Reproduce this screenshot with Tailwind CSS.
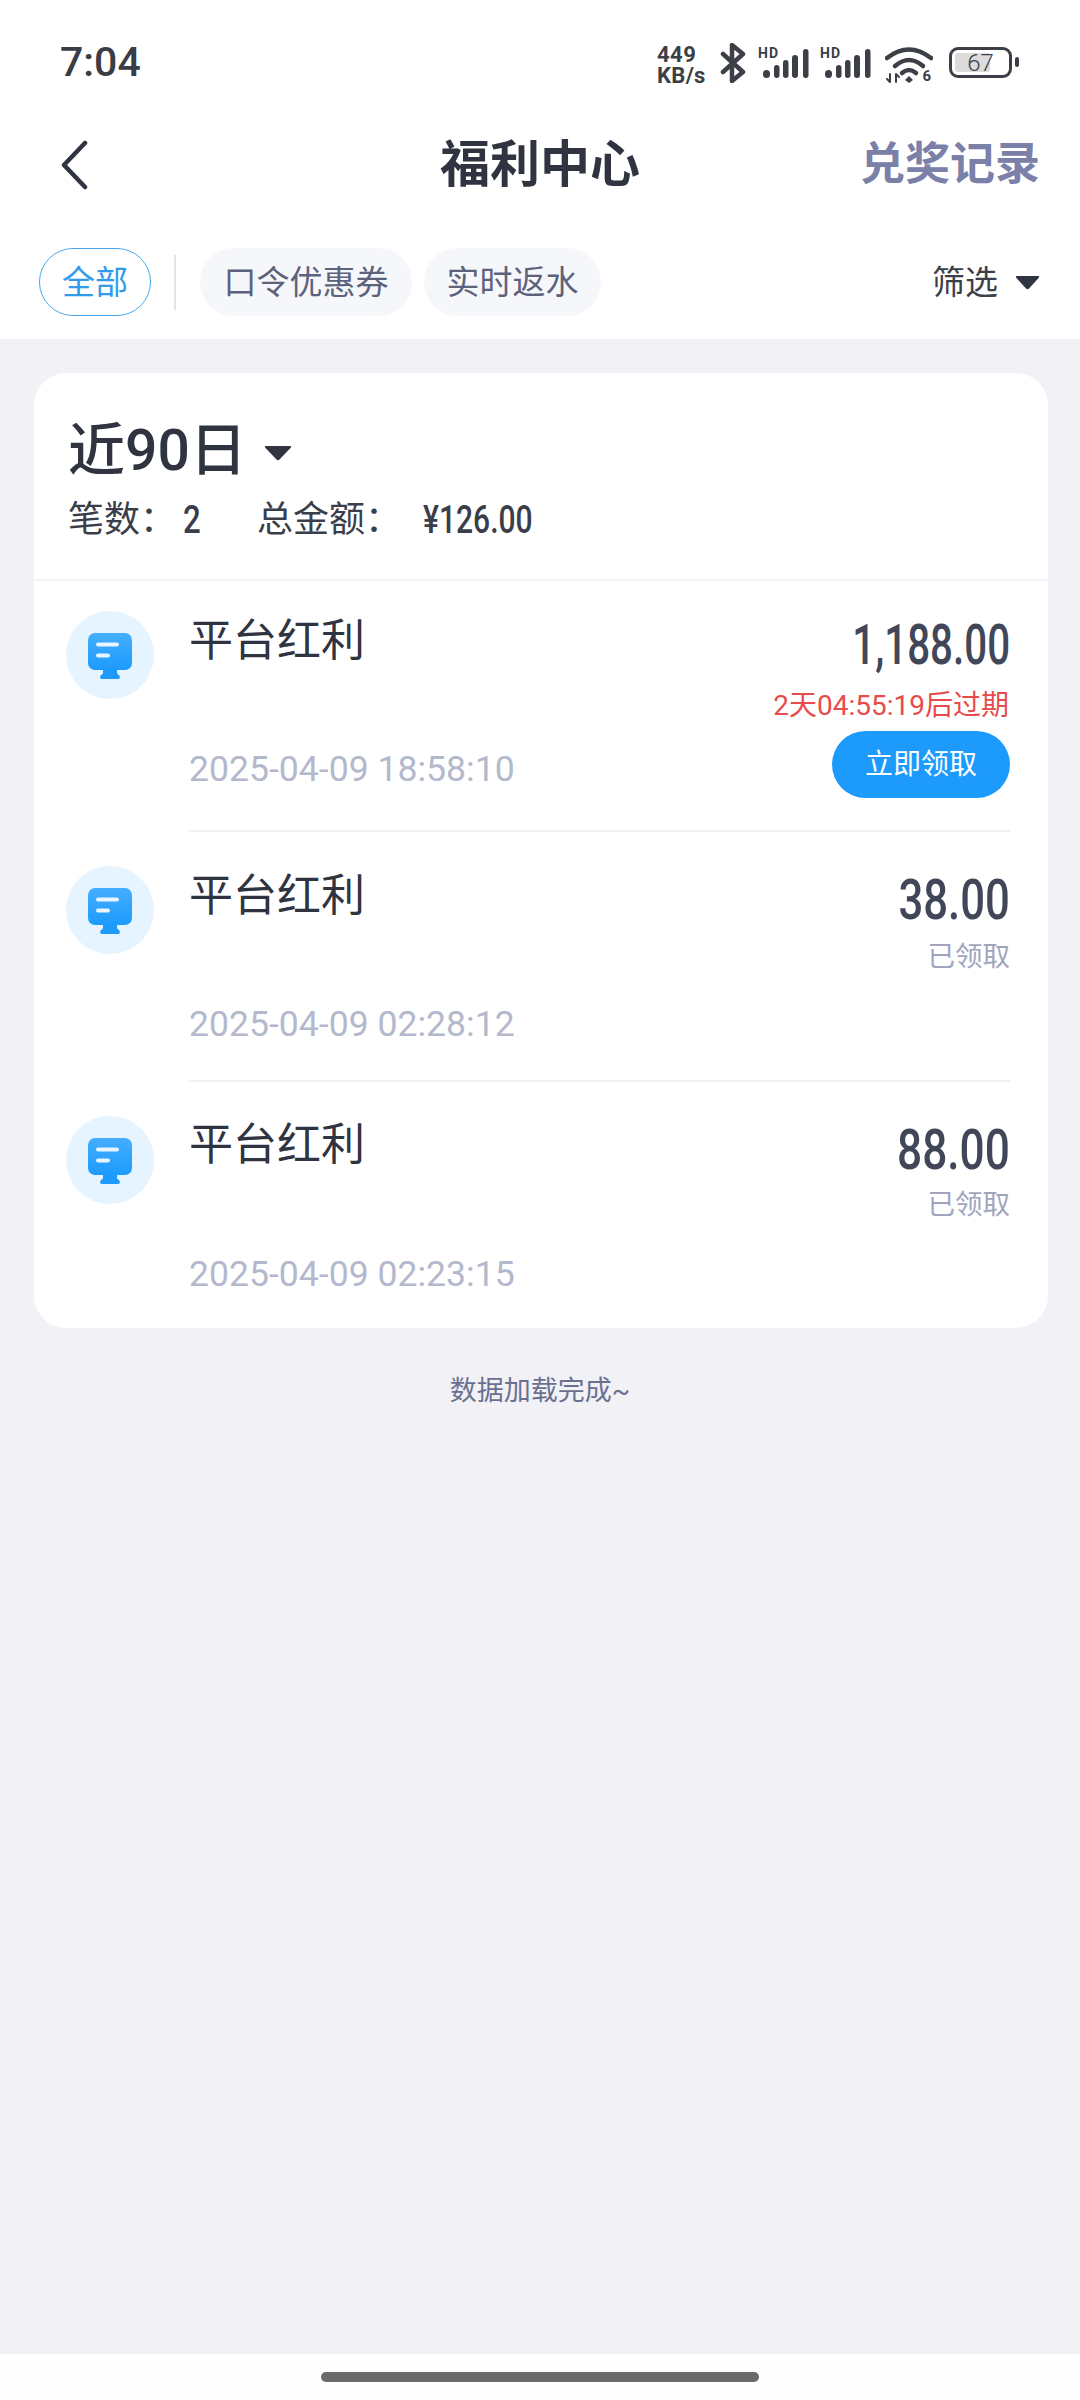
<!DOCTYPE html>
<html lang="zh">
<head>
  <meta charset="UTF-8" />
  <meta name="viewport" content="width=device-width, initial-scale=1.0"/>
  <title>福利中心</title>
  <script src="https://cdn.jsdelivr.net/npm/@tailwindcss/browser@4"></script>
</head>
<body class="bg-[#f1f1f6] font-['Roboto','Noto_Sans_CJK_SC',sans-serif] text-[#2f3440]">
<div class="w-[1080px] h-[2400px] flex flex-col overflow-hidden">

  <!-- status bar + nav + tabs -->
  <header class="bg-white h-[339px] shrink-0">
    <div class="h-[115px] pl-[60px] pr-[68px] pt-[40px] flex justify-between items-start">
      <span class="text-[41px] leading-[44px] font-medium text-[#3a3d45]">7:04</span>
      <div class="flex items-start text-[#3c3f46]">
        <div class="w-[63px] font-bold text-[22px] leading-[21px] mt-[4px]"><div class="tracking-[0.5px]">449</div><div class="tracking-[0.3px]">KB/s</div></div>
        <svg class="mt-[3px]" width="26" height="40" viewBox="0 0 26 40" fill="none" stroke="#3c3f46" stroke-width="4.500" stroke-linejoin="round" stroke-linecap="round"><path d="M3 11 L23 29 L12 38 V2 L23 11 L3 29"/></svg>
        <div class="relative w-[52px] h-[32px] ml-[12px] mt-[8px]">
          <span class="absolute left-0 -top-[2px] font-bold text-[14px] leading-[14px] tracking-[1px]">HD</span>
          <svg class="absolute left-0 top-0" width="52" height="32" viewBox="0 0 52 32" fill="#3c3f46"><rect x="5" y="22" width="7" height="8" rx="3.500"/><rect x="16" y="17" width="5.500" height="13" rx="2.700"/><rect x="25" y="12" width="5.500" height="18" rx="2.700"/><rect x="34" y="7" width="6" height="23" rx="3"/><rect x="45" y="1" width="5.500" height="29" rx="2.700"/></svg>
        </div>
        <div class="relative w-[52px] h-[32px] ml-[10px] mt-[8px]">
          <span class="absolute left-0 -top-[2px] font-bold text-[14px] leading-[14px] tracking-[1px]">HD</span>
          <svg class="absolute left-0 top-0" width="52" height="32" viewBox="0 0 52 32" fill="#3c3f46"><rect x="5" y="22" width="7" height="8" rx="3.500"/><rect x="16" y="17" width="5.500" height="13" rx="2.700"/><rect x="25" y="12" width="5.500" height="18" rx="2.700"/><rect x="34" y="7" width="6" height="23" rx="3"/><rect x="45" y="1" width="5.500" height="29" rx="2.700"/></svg>
        </div>
        <div class="relative w-[48px] h-[37px] ml-[13px] mt-[7px]">
          <svg class="absolute left-0 top-0" width="48" height="37" viewBox="0 0 48 37" fill="none" stroke="#3c3f46" stroke-width="4.500" stroke-linecap="round"><path d="M2 11 Q24 -6 46 11"/><path d="M10 19 Q24 7 38 19"/><path d="M17 26 Q24 20 31 26"/><path d="M24 29 L28 33 L24 36 L20 33Z" fill="#3c3f46" stroke="none"/><path d="M5 27 V35 M2 32 L5 35 M11 35 V27 M11 27 L14 30" stroke-width="2"/></svg>
          <span class="absolute right-[2px] bottom-0 font-bold text-[15px] leading-[16px]">6</span>
        </div>
        <div class="relative w-[63px] h-[31px] ml-[16px] mt-[7px] border-[3px] border-[#3c3f46] rounded-[9px] flex items-center justify-center">
          <div class="absolute left-[3px] top-[3px] bottom-[3px] w-[35px] bg-[#dcdcdc] rounded-[3px]"></div>
          <span class="relative text-[24px] leading-[24px] font-light">67</span>
          <div class="absolute -right-[10px] top-[7px] w-[4px] h-[10px] bg-[#3c3f46] rounded-[2px]"></div>
        </div>
      </div>
    </div>

    <div class="relative h-[100px] flex items-center justify-between pl-[60px] pr-[40px]">
      <svg width="28" height="50" viewBox="0 0 28 50" fill="none" stroke="#2f3440" stroke-width="4.500" stroke-linecap="round" stroke-linejoin="round"><path d="M25 3 L4 25 L25 47"/></svg>
      <h1 class="absolute left-0 right-0 text-center text-[50px] leading-[60px] font-bold text-[#2f3440]">福利中心</h1>
      <span class="relative text-[45px] leading-[60px] font-bold text-[#7b80a8]">兑奖记录</span>
    </div>

    <div class="flex items-center pl-[39px] pr-[40px] mt-[33px]">
      <span class="h-[68px] w-[112px] pt-[2px] flex items-center justify-center rounded-full border border-[#45a8ee] text-[#2f9bea] text-[33px]">全部</span>
      <span class="w-[2px] h-[55px] bg-[#e4e5ea] ml-[23px] mr-[24px]"></span>
      <span class="h-[68px] w-[212px] pt-[2px] flex items-center justify-center rounded-full bg-[#f6f7fa] text-[#5d627c] text-[33px]">口令优惠券</span>
      <span class="h-[68px] w-[177px] pt-[2px] ml-[12px] flex items-center justify-center rounded-full bg-[#f6f7fa] text-[#5d627c] text-[33px]">实时返水</span>
      <span class="ml-auto pt-[2px] text-[33px] text-[#3c3f4a]">筛选</span>
      <svg class="ml-[17px]" width="25" height="15" viewBox="0 0 25 15" fill="#2f3440"><path d="M2 1 H23 Q25 1 23.600 3 L14 13.500 Q12.500 15 11 13.500 L1.400 3 Q0 1 2 1Z"/></svg>
    </div>
  </header>

  <!-- list card -->
  <main class="mx-[34px] mt-[34px] w-[1014px] bg-white rounded-[32px] overflow-hidden">
    <div class="h-[208px] pl-[34px] pt-[44px] border-b-2 border-[#f3f3f6]">
      <div class="flex items-center h-[68px]">
        <span class="text-[57px] leading-[68px] font-medium text-[#2f3440]">近90日</span>
        <svg class="ml-[17px] mt-[4px]" width="28" height="16" viewBox="0 0 28 16" fill="#2f3440"><path d="M2 1 H26 Q28 1 26.500 3 L15.500 14.500 Q14 16 12.500 14.500 L1.500 3 Q0 1 2 1Z"/></svg>
      </div>
      <div class="flex items-center h-[44px] mt-[13px] text-[36px] leading-[44px] text-[#3a3e4a]">
        <span class="w-[115px]">笔数：</span>
        <span class="w-[74px] text-[39px] font-medium origin-left scale-x-[.8]">2</span>
        <span class="w-[166px]">总金额：</span>
        <span class="text-[39px] font-medium origin-left scale-x-[.77]">¥126.00</span>
      </div>
    </div>

    <!-- row 1 -->
    <div class="flex pl-[32px]">
      <div class="mt-[30px] w-[88px] h-[88px] shrink-0 rounded-full bg-[#e6f4ff] flex items-center justify-center">
        <svg width="44" height="46" viewBox="0 0 44 46" class="mt-[1px]"><defs><linearGradient id="g1" x1="0" y1="0" x2="0" y2="1"><stop offset="0" stop-color="#45aeff"/><stop offset="1" stop-color="#1c9bfd"/></linearGradient></defs><rect width="44" height="37" rx="7" fill="url(#g1)"/><path d="M15 37 H29 V40 Q29 41 31 42 L32 44 Q32 46 30 46 H14 Q12 46 12 44 L13 42 Q15 41 15 40Z" fill="#1c9bfd"/><rect x="8" y="9.500" width="23" height="4" rx="2" fill="#e8f5ff"/><rect x="8" y="20.500" width="14" height="4" rx="2" fill="#e8f5ff"/></svg>
      </div>
      <div class="ml-[35px] mr-[38px] flex-1 h-[251px] flex justify-between border-b-2 border-[#f0f0f3]">
        <div class="flex flex-col">
          <span class="mt-[35px] text-[44px] leading-[50px] text-[#2f3440]">平台红利</span>
          <span class="mt-[82px] text-[35.600px] leading-[42px] text-[#b4b8cc]">2025-04-09 18:58:10</span>
        </div>
        <div class="flex flex-col items-end">
          <span class="mt-[32px] text-[56px] leading-[64px] font-medium text-[#414658] origin-right scale-x-[.72]">1,188.00</span>
          <span class="mt-[11px] pr-[1px] text-[28px] leading-[36px] text-[#e84b4b]">2天04:55:19后过期</span>
          <button class="mt-[7px] w-[178px] h-[67px] rounded-full bg-[#1c9bfd] text-white text-[28px]">立即领取</button>
        </div>
      </div>
    </div>

    <!-- row 2 -->
    <div class="flex pl-[32px]">
      <div class="mt-[34px] w-[88px] h-[88px] shrink-0 rounded-full bg-[#e6f4ff] flex items-center justify-center">
        <svg width="44" height="46" viewBox="0 0 44 46" class="mt-[1px]"><rect width="44" height="37" rx="7" fill="url(#g1)"/><path d="M15 37 H29 V40 Q29 41 31 42 L32 44 Q32 46 30 46 H14 Q12 46 12 44 L13 42 Q15 41 15 40Z" fill="#1c9bfd"/><rect x="8" y="9.500" width="23" height="4" rx="2" fill="#e8f5ff"/><rect x="8" y="20.500" width="14" height="4" rx="2" fill="#e8f5ff"/></svg>
      </div>
      <div class="ml-[35px] mr-[38px] flex-1 h-[250px] flex justify-between border-b-2 border-[#f0f0f3]">
        <div class="flex flex-col">
          <span class="mt-[39px] text-[44px] leading-[50px] text-[#2f3440]">平台红利</span>
          <span class="mt-[82px] text-[35.600px] leading-[42px] text-[#b4b8cc]">2025-04-09 02:28:12</span>
        </div>
        <div class="flex flex-col items-end">
          <span class="mt-[36px] text-[56px] leading-[64px] font-medium text-[#414658] origin-right scale-x-[.78]">38.00</span>
          <span class="mt-[7px] text-[27.500px] leading-[36px] text-[#a0a5bd]">已领取</span>
        </div>
      </div>
    </div>

    <!-- row 3 -->
    <div class="flex pl-[32px]">
      <div class="mt-[34px] w-[88px] h-[88px] shrink-0 rounded-full bg-[#e6f4ff] flex items-center justify-center">
        <svg width="44" height="46" viewBox="0 0 44 46" class="mt-[1px]"><rect width="44" height="37" rx="7" fill="url(#g1)"/><path d="M15 37 H29 V40 Q29 41 31 42 L32 44 Q32 46 30 46 H14 Q12 46 12 44 L13 42 Q15 41 15 40Z" fill="#1c9bfd"/><rect x="8" y="9.500" width="23" height="4" rx="2" fill="#e8f5ff"/><rect x="8" y="20.500" width="14" height="4" rx="2" fill="#e8f5ff"/></svg>
      </div>
      <div class="ml-[35px] mr-[38px] flex-1 h-[246px] flex justify-between">
        <div class="flex flex-col">
          <span class="mt-[38px] text-[44px] leading-[50px] text-[#2f3440]">平台红利</span>
          <span class="mt-[83px] text-[35.600px] leading-[42px] text-[#b4b8cc]">2025-04-09 02:23:15</span>
        </div>
        <div class="flex flex-col items-end">
          <span class="mt-[36px] text-[56px] leading-[64px] font-medium text-[#414658] origin-right scale-x-[.79]">88.00</span>
          <span class="mt-[5px] text-[27.500px] leading-[36px] text-[#a0a5bd]">已领取</span>
        </div>
      </div>
    </div>
  </main>

  <p class="mt-[43px] text-center text-[27px] leading-[40px] text-[#6b7090]">数据加载完成~</p>

  <footer class="mt-auto h-[46px] bg-[#fefefe] flex justify-center pt-[18px]">
    <div class="w-[438px] h-[10px] rounded-full bg-[#6a6a6a]"></div>
  </footer>
</div>
</body>
</html>
